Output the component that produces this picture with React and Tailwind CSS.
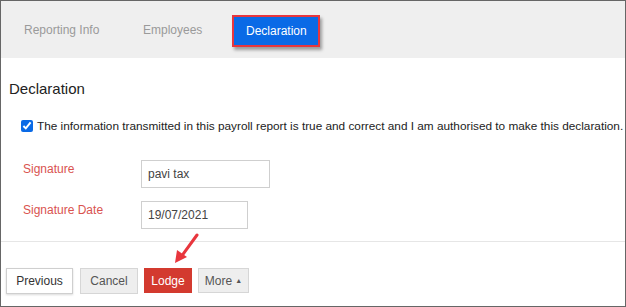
import React from "react";

const tabs = ["Reporting Info", "Employees", "Declaration"];

const Field = ({ label, value, width, mt }) => (
  <div className={`flex items-start ${mt}`}>
    <label className="w-[118px] pt-[2px] text-[12px] leading-[14px] text-[#d9534f]">{label}</label>
    <input
      readOnly
      value={value}
      className={`${width} h-[28px] border border-[#cfcfcf] px-[6px] text-[12px] text-[#444] outline-none`}
    />
  </div>
);

export default function App() {
  return (
    <div
      className="relative w-[626px] h-[307px] overflow-hidden border border-[#666] bg-white"
      style={{ fontFamily: "'Liberation Sans', Arial, sans-serif" }}
    >
      {/* tab bar */}
      <div className="flex h-[57px] items-center bg-[#efefef]">
        <div className="ml-[23px] w-[119px] text-[12px] text-[#9a9a9a]">{tabs[0]}</div>
        <div className="w-[89px] text-[12px] text-[#9a9a9a]">{tabs[1]}</div>
        <div className="mt-[3px] flex h-[32px] w-[88px] items-center border-2 border-[#e8363d] bg-[#0a6ae6] pl-[12px] text-[12px] text-white shadow-[2px_3px_3px_rgba(0,0,0,0.35)]">
          {tabs[2]}
        </div>
      </div>

      <div className="pl-[8px]">
        <h2 className="mt-[22px] text-[15px] leading-[17px] text-[#222]">Declaration</h2>

        <div className="mt-[22px] ml-[12px] flex items-center gap-[4px]">
          <input type="checkbox" defaultChecked className="m-0 h-[12px] w-[12px] accent-[#0a6ae6]" />
          <span className="whitespace-nowrap text-[11.8px] leading-[14px] text-[#222]">
            The information transmitted in this payroll report is true and correct and I am authorised to make this declaration.
          </span>
        </div>

        <div className="ml-[14px]">
          <Field label="Signature" value="pavi tax" width="w-[129px]" mt="mt-[27px]" />
          <Field label="Signature Date" value="19/07/2021" width="w-[107px]" mt="mt-[13px]" />
        </div>
      </div>

      <div className="mt-[12px] border-t border-[#e6e6e6]" />

      <div className="mt-[26px] flex gap-[6px] pl-[5px]">
        <button className="h-[26px] w-[67px] border border-[#cfcfcf] bg-white text-[12px] text-[#333] shadow-[0_1px_2px_rgba(0,0,0,0.15)]">
          Previous
        </button>
        <button className="ml-[1px] h-[26px] w-[58px] border border-[#d6d6d6] bg-[#eeeeee] text-[12px] text-[#555]">
          Cancel
        </button>
        <button className="h-[25px] w-[48px] bg-[#d33a2f] text-[12px] text-white">
          Lodge
        </button>
        <button className="flex h-[25px] w-[51px] items-center justify-center gap-[3px] border border-[#d6d6d6] bg-[#eeeeee] text-[12px] text-[#555]">
          More
          <span className="text-[7px] leading-none">▲</span>
        </button>
      </div>

      {/* red annotation arrow */}
      <svg className="absolute left-[168px] top-[230px]" width="34" height="36" viewBox="0 0 34 36">
        <line x1="28" y1="4" x2="12" y2="26" stroke="#e8363d" strokeWidth="3" strokeLinecap="round" />
        <polygon points="6,32 8,19 18,26" fill="#e8363d" />
      </svg>
    </div>
  );
}
